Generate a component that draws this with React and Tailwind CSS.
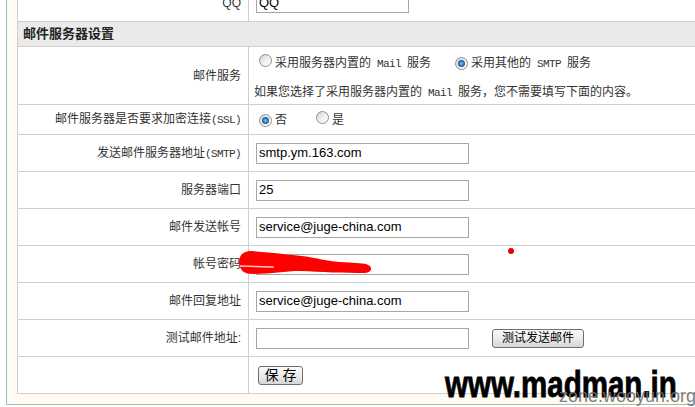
import React from "react";

function Radio({ checked }) {
  return (
    <span className="inline-flex w-[13px] h-[13px] shrink-0 items-center justify-center rounded-full border border-[#8e8f8f] bg-gradient-to-br from-[#d0d0d0] via-[#f0f0f0] to-[#ffffff]">
      {checked ? (
        <span className="block w-[7px] h-[7px] rounded-full bg-radial from-[#8fc3f0] via-[#2a6fb5] to-[#0d3f75]" />
      ) : null}
    </span>
  );
}

const mono = "font-['Liberation_Mono','Noto_Sans_CJK_SC',monospace] text-[11px] tracking-[-0.6px] whitespace-pre";

function Row({ label, children, h = "h-[37px]", top = true }) {
  return (
    <div className={`flex ${h} ${top ? "border-t border-[#cfcfcf]" : ""}`}>
      <div className="w-[231px] shrink-0 border-r border-[#cfcfcf] flex items-center justify-end pr-[7px] text-[12px] text-[#333]">
        {label}
      </div>
      <div className="flex-1 flex items-center">{children}</div>
    </div>
  );
}

function Field({ value, w = "w-[213px]" }) {
  return (
    <div className={`ml-[7px] ${w} h-[21px] border border-[#a6a6a6] bg-white flex items-center pl-[2px] text-[13px] text-black font-['Liberation_Sans',sans-serif]`}>
      {value}
    </div>
  );
}

function Btn({ children, cls }) {
  return (
    <div className={`h-[19px] flex items-center justify-center rounded-[3px] border border-[#6f6f6f] bg-gradient-to-b from-[#fbfbfb] via-[#ececec] to-[#d6d6d6] text-black ${cls}`}>
      {children}
    </div>
  );
}

export default function App() {
  return (
    <div className="relative w-[695px] h-[407px] overflow-hidden bg-white font-['Liberation_Sans','Noto_Sans_CJK_SC',sans-serif]">
      <div className="flex flex-col w-[740px] ml-[6px] -mt-[16px] border-l border-b border-[#8cc8b4] bg-[#fffbf3] pl-[10px] pb-[10px]">
        <div className="flex flex-col bg-white border-l border-b border-[#cfcfcf]">
          <Row label="QQ" top={false}>
            <Field value="QQ" w="w-[153px]" />
          </Row>
          <div className="h-[25px] border-t border-[#cfcfcf] bg-[#eaeaea] flex items-center pl-[5px] text-[13px] font-bold text-[#222]">
            邮件服务器设置
          </div>
          <Row label="邮件服务" h="h-[58px]">
            <div className="flex flex-col self-stretch pt-[6px] text-[12px] text-[#333]">
              <div className="h-[20px] flex items-center">
                <span className="ml-[10px]"><Radio /></span>
                <span className="ml-[3px]">采用服务器内置的<span className={mono}> Mail </span>服务</span>
                <span className="ml-[24px]"><Radio checked /></span>
                <span className="ml-[3px]">采用其他的<span className={mono}> SMTP </span>服务</span>
              </div>
              <div className="h-[20px] mt-[9px] flex items-center pl-[5px]">
                <span>如果您选择了采用服务器内置的<span className={mono}> Mail </span>服务，您不需要填写下面的内容。</span>
              </div>
            </div>
          </Row>
          <Row label={<span>邮件服务器是否要求加密连接<span className={mono}>(SSL)</span></span>} h="h-[30px]">
            <div className="flex items-center text-[12px] text-[#333]">
              <span className="ml-[10px]"><Radio checked /></span>
              <span className="ml-[3px]">否</span>
              <span className="ml-[29px]"><Radio /></span>
              <span className="ml-[3px]">是</span>
            </div>
          </Row>
          <Row label={<span>发送邮件服务器地址<span className={mono}>(SMTP)</span></span>}>
            <Field value="smtp.ym.163.com" />
          </Row>
          <Row label="服务器端口">
            <Field value="25" />
          </Row>
          <Row label="邮件发送帐号">
            <Field value="service@juge-china.com" />
          </Row>
          <Row label="帐号密码">
            <Field value="" />
          </Row>
          <Row label="邮件回复地址">
            <Field value="service@juge-china.com" />
          </Row>
          <Row label="测试邮件地址:">
            <Field value="" />
            <Btn cls="ml-[23px] w-[92px] text-[12px]">测试发送邮件</Btn>
          </Row>
          <Row label="">
            <Btn cls="ml-[9px] w-[45px] text-[14px]">保 存</Btn>
          </Row>
        </div>
      </div>

      <svg className="absolute left-0 top-0 pointer-events-none" width="695" height="407" viewBox="0 0 695 407">
        <path
          d="M239 261 C240 254 244 251 252 251 C266 252 284 254 302 256 C318 258 326 261 340 262 C352 263 362 263 366 264 C373 266 373 272 365 273 C345 273 320 272 300 271 C285 271 270 274 252 274 C244 274 239 270 239 261 Z"
          fill="#ff0000"
        />
        <path d="M240 266 L274 267" stroke="#ffc8c8" strokeWidth="1.5" />
        <circle cx="511" cy="251" r="3" fill="#ee0000" />
      </svg>

      <div className="absolute left-[445px] top-[367px] pointer-events-none">
        <span className="inline-block origin-left scale-x-[0.82] text-[36px] font-bold leading-none text-black font-['Liberation_Sans',sans-serif] whitespace-nowrap [-webkit-text-stroke:0.8px_black]">
          www.madman.in
        </span>
      </div>
      <div className="absolute left-[559px] top-[387px] pointer-events-none text-[18px] leading-none text-[#6f6f6f]/90 font-['Liberation_Sans',sans-serif] whitespace-nowrap">
        zone.wooyun.org
      </div>
    </div>
  );
}
